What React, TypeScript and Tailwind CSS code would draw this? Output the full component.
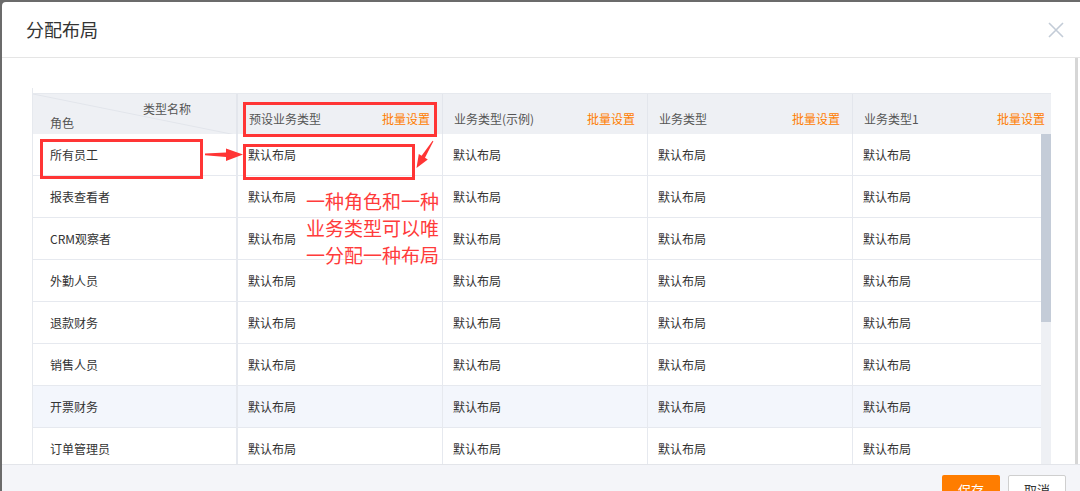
import React from 'react';

const font = { fontFamily: '"Noto Sans CJK SC", "Noto Sans", sans-serif' };

const columns = ['预设业务类型', '业务类型(示例)', '业务类型', '业务类型1'];
const roles = ['所有员工', '报表查看者', 'CRM观察者', '外勤人员', '退款财务', '销售人员', '开票财务', '订单管理员'];

function HeaderRow() {
  return (
    <div className="flex h-[41px] w-[1018px] shrink-0 overflow-hidden border-t border-[#e6e9ee] bg-[#eef0f4]">
      <div className="relative flex w-[205px] shrink-0 flex-col border-r-2 border-[#e3e6ec] pt-[8px] pl-[17px] pr-[45px] text-[12px] leading-[14px] text-[#555]">
        <svg className="absolute left-0 top-0" width="203" height="41">
          <line x1="0" y1="0" x2="203" y2="41" stroke="#e2e5eb" strokeWidth="1" />
        </svg>
        <span className="relative self-end">类型名称</span>
        <span className="relative">角色</span>
      </div>
      {columns.map((c) => (
        <div
          key={c}
          className="flex w-[205px] shrink-0 items-center justify-between border-r border-[#e3e6ec] pt-[9px] pl-[11px] pr-[12px] text-[12px]"
        >
          <span className="text-[#555]">{c}</span>
          <span className="text-[#ff7d00]">批量设置</span>
        </div>
      ))}
    </div>
  );
}

function BodyRows() {
  return (
    <div className="flex h-[330px] overflow-hidden">
      <div className="w-[1008px] shrink-0 overflow-hidden">
        {roles.map((r) => (
          <div
            key={r}
            className={`flex h-[42px] w-[1025px] border-b border-[#e6e9ef] text-[12px] text-[#333] ${
              r === '开票财务' ? 'bg-[#f3f6fc]' : 'bg-white'
            }`}
          >
            <div className="flex w-[205px] shrink-0 items-center border-r-2 border-[#e6e9ef] pl-[17px]">{r}</div>
            {columns.map((c) => (
              <div key={c} className="flex w-[205px] shrink-0 items-center border-r border-[#e6e9ef] pl-[10px]">
                默认布局
              </div>
            ))}
          </div>
        ))}
      </div>
      <div className="flex w-[10px] shrink-0 flex-col bg-[#eef0f4]">
        <div className="h-[188px] bg-[#c4ccd8]" />
      </div>
    </div>
  );
}

function Annotations() {
  return (
    <>
      <div className="absolute left-[40px] top-[139px] h-[40px] w-[163px] border-[3px] border-[#ff3535]" />
      <div className="absolute left-[243px] top-[102px] h-[35px] w-[194px] border-[3px] border-[#ff3535]" />
      <div className="absolute left-[243px] top-[144px] h-[36px] w-[172px] border-[3px] border-[#ff3535]" />
      <svg className="absolute left-0 top-0" width="1080" height="491">
        <polygon points="205,153.6 226,152.4 226,148.5 243,154.5 226,161 226,157 205,155.2" fill="#ff3535" />
        <polygon
          points="433.4,141.3 425,157.8 427.8,159.6 416.5,168 418.8,154 421.6,155.7 432.6,140.7"
          fill="#ff3535"
        />
      </svg>
      <div className="absolute left-[306px] top-[187px] text-[19px] leading-[27px] text-[#ff3b3b]">
        <div>一种角色和一种</div>
        <div>业务类型可以唯</div>
        <div>一分配一种布局</div>
      </div>
    </>
  );
}

export default function App() {
  return (
    <div className="relative h-[491px] w-[1080px] overflow-hidden bg-[#6b6b6b] pl-[2px] pt-[2px]" style={font}>
      <div className="flex h-[520px] w-[1090px] flex-col overflow-hidden rounded-tl-[4px] bg-white">
        <div className="flex h-[56px] shrink-0 items-center justify-between border-b border-[#e5e5e5] pl-[24px] pr-[31px]">
          <span className="text-[18px] text-[#333]">分配布局</span>
          <svg width="16" height="16" viewBox="0 0 16 16" className="mr-[-3px]">
            <path d="M1 1 L15 15 M15 1 L1 15" stroke="#c3ccd7" strokeWidth="1.6" fill="none" />
          </svg>
        </div>
        <div className="flex h-[407px] shrink-0 border-b border-[#e3e5ea]">
          <div className="w-[1073px] shrink-0 pl-[30px] pt-[30px]">
            <div className="h-full w-[1020px] border-l border-[#e6e9ee] pt-[5px]">
              <HeaderRow />
              <BodyRows />
            </div>
          </div>
          <div className="w-[3px] shrink-0 bg-[#d6d6d6]" />
        </div>
        <div className="flex flex-1 items-start gap-[8px] bg-[#f4f5f9] pl-[940px] pt-[10px]">
          <button className="h-[30px] w-[58px] rounded-[2px] bg-[#ff7d00] text-[13px] text-white">保存</button>
          <button className="h-[30px] w-[58px] rounded-[2px] border border-[#cfcfcf] bg-white text-[13px] text-[#333]">
            取消
          </button>
        </div>
      </div>
      <Annotations />
    </div>
  );
}
